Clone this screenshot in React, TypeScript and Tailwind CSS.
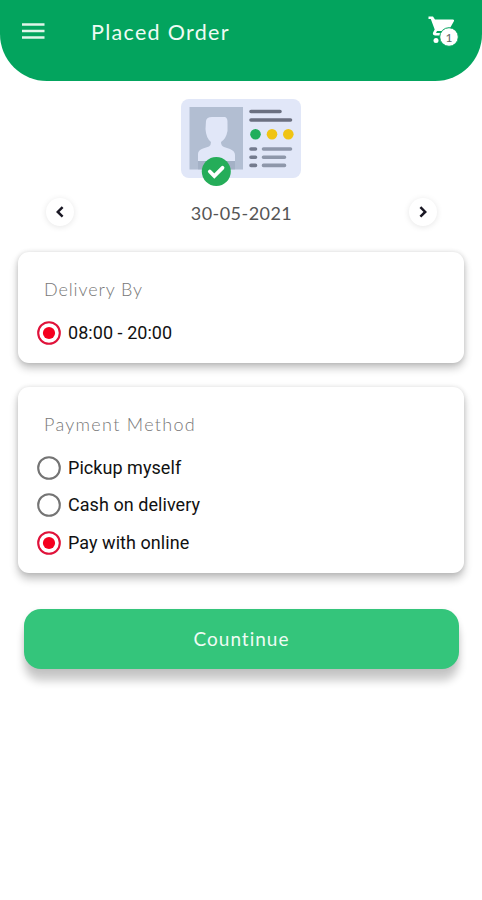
import React from "react";

function Radio({ label, checked }: { label: string; checked?: boolean }) {
  return (
    <label className="flex h-[37.5px] items-center gap-[7px]">
      <svg className="h-6 w-6 shrink-0" viewBox="0 0 24 24" fill="none">
        <circle cx="12" cy="12" r="10.8" stroke={checked ? "#e0123a" : "#747474"} strokeWidth="2.1" />
        {checked && <circle cx="12" cy="12" r="6.1" fill="#f5001f" />}
      </svg>
      <span className="font-['Roboto',sans-serif] text-[18px] leading-6 tracking-[0.05px] whitespace-nowrap text-[#111]">
        {label}
      </span>
    </label>
  );
}

function ArrowButton({ direction }: { direction: "left" | "right" }) {
  return (
    <button className="flex h-7 w-7 items-center justify-center rounded-full bg-white shadow-[0_1px_6px_rgba(0,0,0,0.1)]">
      <svg className="h-[14px] w-[10px]" viewBox="0 0 10 14" fill="none" stroke="#1a1824" strokeWidth="2.5">
        <path d={direction === "left" ? "M7.6 2.2L2.8 6.9L7.6 11.6" : "M2.4 2.2L7.2 6.9L2.4 11.6"} />
      </svg>
    </button>
  );
}

function IdCard() {
  return (
    <svg className="h-[90px] w-[122px]" viewBox="180 98 122 90">
      <rect x="181" y="99" width="120" height="79" rx="8" fill="#e1e7f8" />
      <rect x="189.500" y="107" width="53.500" height="62.500" fill="#b2bed2" />
      <path
        d="M198 169.500V154Q198 150 203 148.500L209 146.500Q211 145.500 211 142Q206 138 205.500 129L206 121Q206.500 117 212 117H225Q228 118 227.500 124V131Q226 139 221 142Q221 146 224 147L230 149Q235 151 235 155V169.500Z"
        fill="#e1e7f8"
      />
      <path d="M198 161H235V169.500H198Z" fill="#a4b1c6" />
      <g strokeLinecap="round" strokeWidth="3.600">
        <path d="M251 111.500H280M251 120H290.500" stroke="#6b7081" />
        <path d="M251 149H255.500M251 157.200H255.500M251 165.400H255.500" stroke="#747b8e" />
        <path d="M263.500 149H290.500M263.500 157.200H284.500M263.500 165.400H284.500" stroke="#8e97aa" />
      </g>
      <circle cx="255.500" cy="134.200" r="5.300" fill="#20ae5c" />
      <circle cx="272" cy="134.200" r="5.300" fill="#f0c414" />
      <circle cx="288.300" cy="134.200" r="5.300" fill="#f0c414" />
      <circle cx="216.300" cy="171.500" r="14.500" fill="#25ad59" />
      <path d="M209.800 171.500L214.300 176L222.500 167.800" fill="none" stroke="#fff" strokeWidth="3.800" strokeLinecap="round" />
    </svg>
  );
}

function CartIcon() {
  return (
    <svg className="h-8 w-8" viewBox="427 15 32 32">
      <path d="M428.500 16.500H433L435 19.500H453Q454.500 19.500 454 21L449.500 29Q448.500 31 446.500 31H437L436 33H446V35.500H435Q432 35 433.200 32.300L434.700 29.500L430.800 19H428.500Z" fill="#fff" />
      <circle cx="436" cy="40.500" r="2.500" fill="#fff" />
      <circle cx="449" cy="37" r="9.300" fill="#fff" stroke="#03a45e" strokeWidth="1" />
      <text x="449" y="41.500" textAnchor="middle" fill="#666" className="font-['Lato',sans-serif] text-[12px]">1</text>
    </svg>
  );
}

export default function App() {
  return (
    <div className="h-[900px] w-[482px] overflow-hidden bg-white font-['Lato',sans-serif]">
      <header className="flex h-[81px] items-start rounded-b-[47px] bg-[#03a45e]">
        <svg className="mt-[22px] ml-[22px] h-[18px] w-[23px]" viewBox="0 0 23 18" stroke="#e0f5e9" strokeWidth="2.500">
          <path d="M0 2.500H22.500M0 9H22.500M0 15.500H22.500" />
        </svg>
        <h1 className="mt-[16px] ml-[46px] text-[21.5px] leading-8 tracking-[1.3px] whitespace-nowrap text-[#effbf4]">Placed Order</h1>
        <div className="mt-[15px] mr-[23px] ml-auto">
          <CartIcon />
        </div>
      </header>

      <div className="mt-[17px] flex h-[90px] justify-center">
        <IdCard />
      </div>

      <div className="mt-[10px] flex h-7 items-center justify-between pr-[45px] pl-[46px]">
        <ArrowButton direction="left" />
        <span className="mt-[1px] text-[18px] leading-7 tracking-[0.45px] whitespace-nowrap text-[#555]">30-05-2021</span>
        <ArrowButton direction="right" />
      </div>

      <section className="mx-[18px] mt-[26px] h-[111px] rounded-[11px] bg-white pl-[19px] shadow-[0_5px_8px_rgba(0,0,0,0.24),0_0_5px_rgba(0,0,0,0.12)]">
        <h2 className="pt-[25px] pl-[7px] text-[18px] leading-6 font-light tracking-[0.9px] text-[#777]">Delivery By</h2>
        <div className="pt-[13px]">
          <Radio label="08:00 - 20:00" checked />
        </div>
      </section>

      <section className="mx-[18px] mt-[24px] h-[186px] rounded-[11px] bg-white pl-[19px] shadow-[0_6px_8px_rgba(0,0,0,0.24),0_0_5px_rgba(0,0,0,0.12)]">
        <h2 className="pt-[25px] pl-[7px] text-[18px] leading-6 font-light tracking-[1.3px] text-[#777]">Payment Method</h2>
        <div className="pt-[13px]">
          <Radio label="Pickup myself" />
          <Radio label="Cash on delivery" />
          <Radio label="Pay with online" checked />
        </div>
      </section>

      <button className="mt-[36px] ml-6 flex h-[60px] w-[435px] items-center justify-center rounded-[17px] bg-[#34c57b] text-[19px] tracking-[1px] text-[#effbf4] shadow-[0_12px_9px_rgba(0,0,0,0.2),0_2px_6px_rgba(0,0,0,0.08)]">
        Countinue
      </button>
    </div>
  );
}
